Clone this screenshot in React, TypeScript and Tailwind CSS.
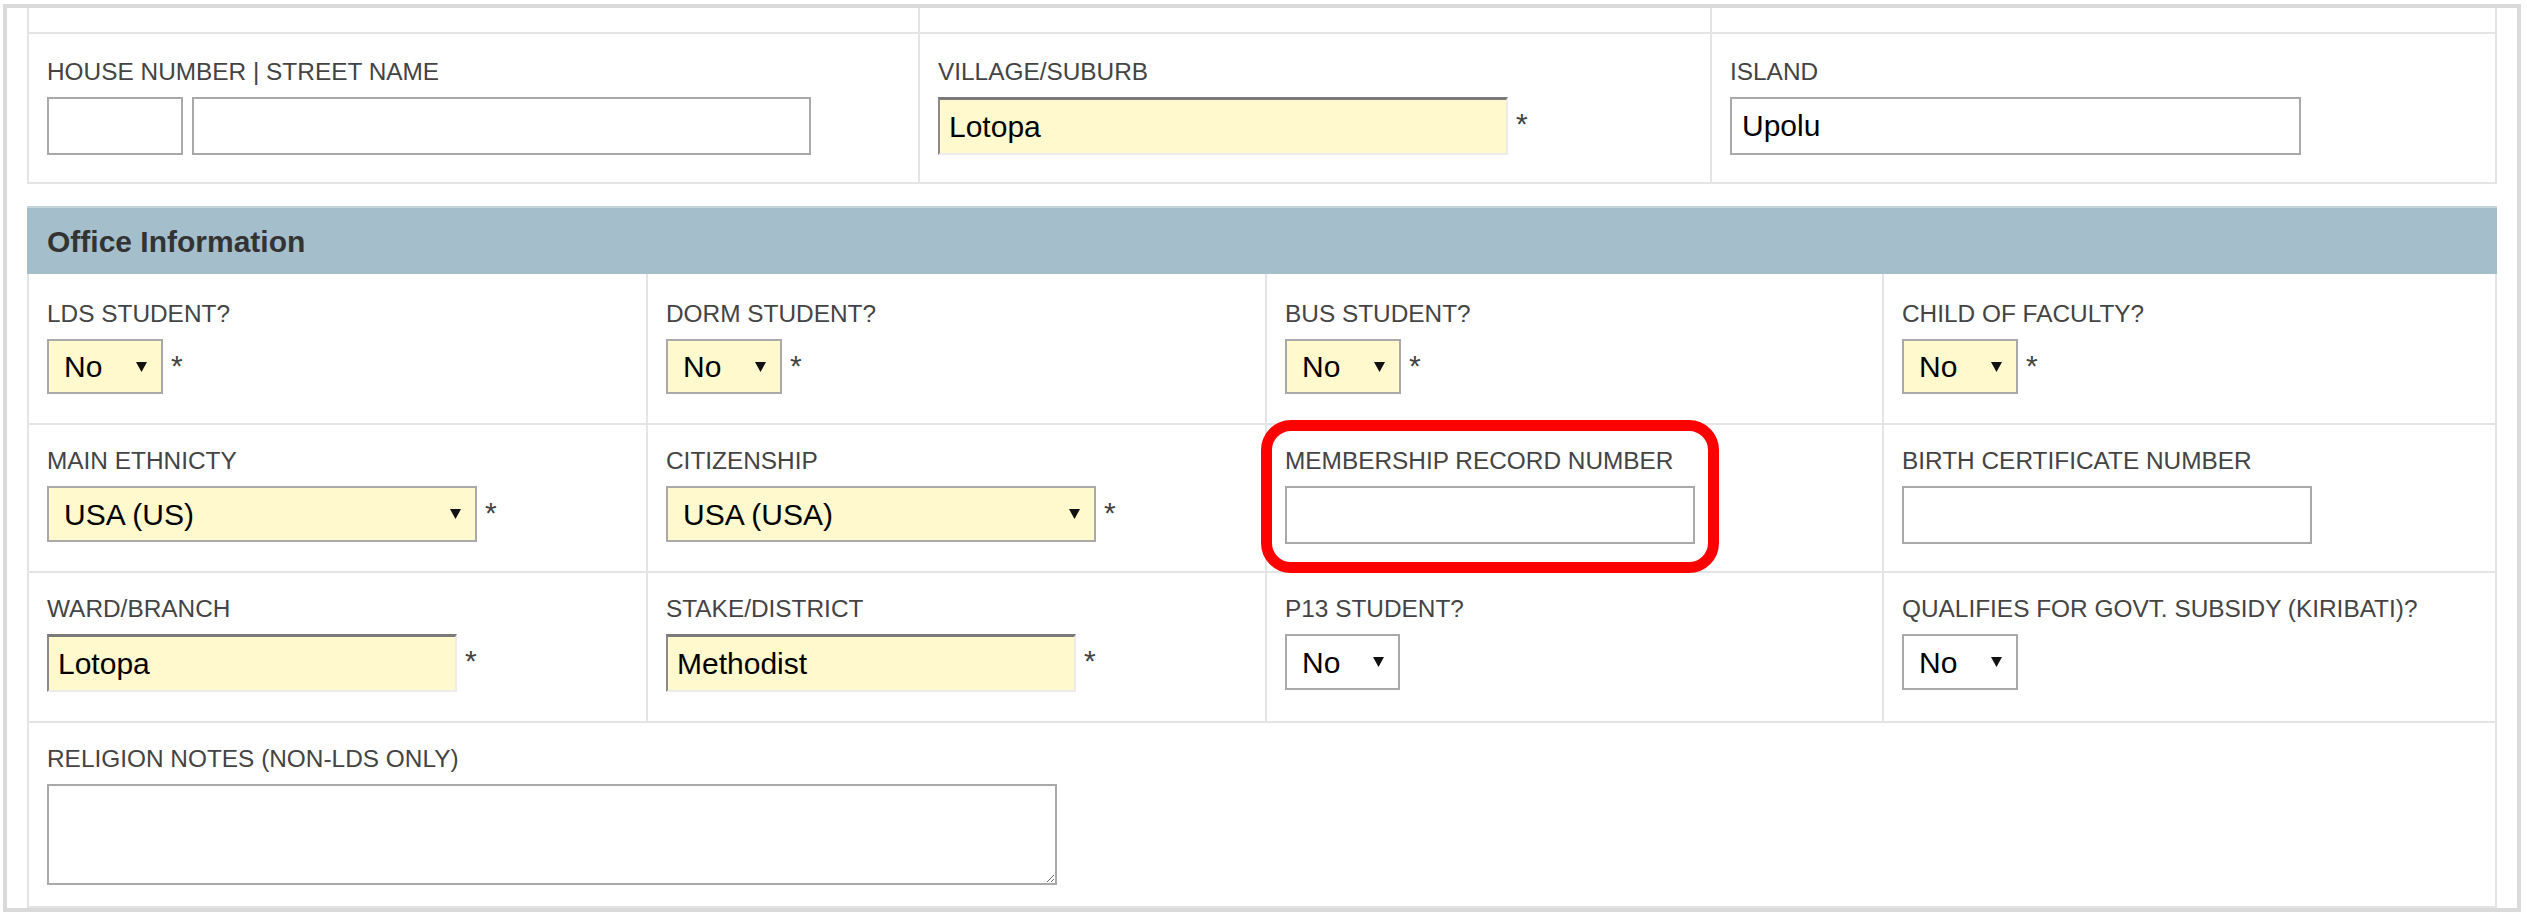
import React from "react";

const font = "font-['Liberation_Sans',Arial,Helvetica,sans-serif]";

function Label({ children }: { children: React.ReactNode }) {
  return <div className="text-[24.4px] leading-[28px] text-[#444] mb-[11px] whitespace-nowrap">{children}</div>;
}

function Req() {
  return <span className="ml-[8px] mt-[10px] text-[30px] leading-[34px] text-[#444]">*</span>;
}

function Arrow() {
  return (
    <svg width="11" height="10" viewBox="0 0 11 10" className="absolute right-[16px] top-1/2 -translate-y-1/2 pointer-events-none">
      <polygon points="0,0 11,0 5.5,10" fill="#111" />
    </svg>
  );
}

function Select({ value, size, yellow = true }: { value: string; size: string; yellow?: boolean }) {
  return (
    <div className={`relative ${size}`}>
      <select
        defaultValue={value}
        className={`appearance-none w-full h-full border-2 border-[#a9a9a9] pl-[15px] text-[30px] text-black outline-none ${yellow ? "bg-[#fff9cd]" : "bg-white"}`}
      >
        <option value={value}>{value}</option>
      </select>
      <Arrow />
    </div>
  );
}

function Input({ value = "", size, inset = false }: { value?: string; size: string; inset?: boolean }) {
  const look = inset
    ? "bg-[#fff9cd] border-t-[3px] border-l-[2px] border-r-[2px] border-b-[2px] border-t-[#7a7a7a] border-l-[#8a8a8a] border-r-[#ececec] border-b-[#ececec] pl-[9px]"
    : "bg-white border-2 border-[#a9a9a9] pl-[10px]";
  return <input readOnly value={value} className={`${size} ${look} text-[30px] text-black outline-none`} />;
}

const cell = "border-b-2 border-[#e4e4e4] px-[18px]";
const cellR = "border-r-2";

export default function App() {
  return (
    <div className={`w-[2527px] h-[914px] bg-white overflow-hidden ${font}`}>
      <div className="ml-[3px] mt-[4px] w-[2518px] border-[4px] border-[#dadada] px-[20px] pb-0">
        {/* address table (cut off at top) */}
        <div className="grid grid-cols-[891px_792px_1fr] border-x-2 border-[#e4e4e4]">
          <div className={`${cell} ${cellR} h-[26px]`} />
          <div className={`${cell} ${cellR} h-[26px]`} />
          <div className={`${cell} h-[26px]`} />

          <div className={`${cell} ${cellR} h-[150px] pt-[24px]`}>
            <Label>HOUSE NUMBER | STREET NAME</Label>
            <div className="flex gap-[9px]">
              <Input size="w-[136px] h-[58px]" />
              <Input size="w-[619px] h-[58px]" />
            </div>
          </div>
          <div className={`${cell} ${cellR} h-[150px] pt-[24px]`}>
            <Label>VILLAGE/SUBURB</Label>
            <div className="flex items-start">
              <Input inset value="Lotopa" size="w-[570px] h-[58px]" />
              <Req />
            </div>
          </div>
          <div className={`${cell} h-[150px] pt-[24px]`}>
            <Label>ISLAND</Label>
            <Input value="Upolu" size="w-[571px] h-[58px]" />
          </div>
        </div>

        {/* office information */}
        <div className="mt-[22px]">
          <div className="h-[68px] bg-[#a4bfcb] border-t-2 border-[#c3d4dc] px-[20px] flex items-center">
            <span className="text-[30px] font-bold text-[#333]">Office Information</span>
          </div>
          <div className="grid grid-cols-[619px_619px_617px_1fr] border-x-2 border-[#e4e4e4]">
            {/* row 1 */}
            {["LDS STUDENT?", "DORM STUDENT?", "BUS STUDENT?", "CHILD OF FACULTY?"].map((l, i) => (
              <div key={l} className={`${cell} ${i < 3 ? cellR : ""} h-[151px] pt-[26px]`}>
                <Label>{l}</Label>
                <div className="flex items-start">
                  <Select value="No" size="w-[116px] h-[55px]" />
                  <Req />
                </div>
              </div>
            ))}

            {/* row 2 */}
            <div className={`${cell} ${cellR} h-[148px] pt-[22px]`}>
              <Label>MAIN ETHNICTY</Label>
              <div className="flex items-start">
                <Select value="USA (US)" size="w-[430px] h-[56px]" />
                <Req />
              </div>
            </div>
            <div className={`${cell} ${cellR} h-[148px] pt-[22px]`}>
              <Label>CITIZENSHIP</Label>
              <div className="flex items-start">
                <Select value="USA (USA)" size="w-[430px] h-[56px]" />
                <Req />
              </div>
            </div>
            <div className={`${cell} ${cellR} h-[148px] pt-[22px] relative`}>
              <Label>MEMBERSHIP RECORD NUMBER</Label>
              <Input size="w-[410px] h-[58px]" />
              {/* highlight annotation */}
              <div className="absolute left-[-6px] top-[-5px] w-[458px] h-[153px] border-[11px] border-[#ff0000] rounded-[30px] pointer-events-none" />
            </div>
            <div className={`${cell} h-[148px] pt-[22px]`}>
              <Label>BIRTH CERTIFICATE NUMBER</Label>
              <Input size="w-[410px] h-[58px]" />
            </div>

            {/* row 3 */}
            <div className={`${cell} ${cellR} h-[150px] pt-[22px]`}>
              <Label>WARD/BRANCH</Label>
              <div className="flex items-start">
                <Input inset value="Lotopa" size="w-[410px] h-[58px]" />
                <Req />
              </div>
            </div>
            <div className={`${cell} ${cellR} h-[150px] pt-[22px]`}>
              <Label>STAKE/DISTRICT</Label>
              <div className="flex items-start">
                <Input inset value="Methodist" size="w-[410px] h-[58px]" />
                <Req />
              </div>
            </div>
            <div className={`${cell} ${cellR} h-[150px] pt-[22px]`}>
              <Label>P13 STUDENT?</Label>
              <Select value="No" yellow={false} size="w-[115px] h-[56px]" />
            </div>
            <div className={`${cell} h-[150px] pt-[22px]`}>
              <Label>QUALIFIES FOR GOVT. SUBSIDY (KIRIBATI)?</Label>
              <Select value="No" yellow={false} size="w-[116px] h-[56px]" />
            </div>

            {/* row 4 */}
            <div className={`${cell} col-span-4 h-[185px] pt-[22px]`}>
              <Label>RELIGION NOTES (NON-LDS ONLY)</Label>
              <textarea className="block w-[1010px] h-[101px] border-2 border-[#a9a9a9] bg-white outline-none resize" />
            </div>
          </div>
        </div>
      </div>
    </div>
  );
}
